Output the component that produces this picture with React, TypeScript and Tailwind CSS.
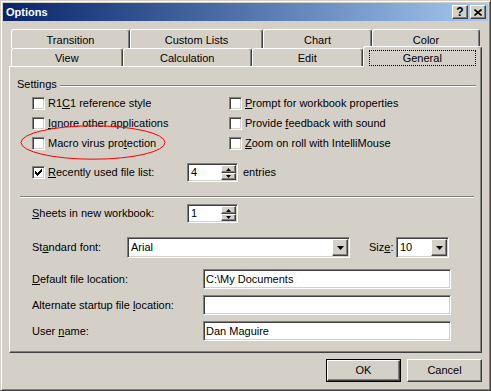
import React from 'react';

const raised =
  'border border-t-white border-l-white border-r-[#404040] border-b-[#404040] shadow-[inset_-1px_-1px_0_#808080] bg-[#d4d0c8]';
const sunken =
  'border border-t-[#808080] border-l-[#808080] border-r-white border-b-white shadow-[inset_1px_1px_0_#404040,inset_-1px_-1px_0_#d4d0c8] bg-white p-[1px]';

function Key({ children }: { children: React.ReactNode }) {
  return <span className="underline decoration-1 underline-offset-[1px]">{children}</span>;
}

// 7x7 pixel check mark, row by row
const checkRows: [number, number, number][] = [
  [6, 0, 1],
  [5, 1, 2],
  [0, 2, 1],
  [4, 2, 3],
  [0, 3, 2],
  [3, 3, 3],
  [0, 4, 5],
  [1, 5, 3],
  [2, 6, 1],
];

function CheckBox({ checked, label }: { checked?: boolean; label: React.ReactNode }) {
  return (
    <div className="flex items-center">
      <span className={`${sunken} flex h-[13px] w-[13px] shrink-0 items-center justify-center`}>
        {checked && (
          <svg width="7" height="7" viewBox="0 0 7 7" shapeRendering="crispEdges">
            {checkRows.map(([x, y, w], i) => (
              <rect key={i} x={x} y={y} width={w} height={1} fill="#000" />
            ))}
          </svg>
        )}
      </span>
      <span className="ml-[3px] whitespace-nowrap">{label}</span>
    </div>
  );
}

function Arrow({ up, w = 5 }: { up?: boolean; w?: number }) {
  const h = Math.ceil(w / 2);
  const pts = up ? `0,${h} ${w},${h} ${w / 2},0` : `0,0 ${w},0 ${w / 2},${h}`;
  return (
    <svg width={w} height={h} viewBox={`0 0 ${w} ${h}`}>
      <polygon points={pts} fill="#000" />
    </svg>
  );
}

function Spin({ value }: { value: string }) {
  return (
    <div className={`${sunken} flex h-[19px] w-[51px]`}>
      <span className="flex flex-1 items-center pl-[2px]">{value}</span>
      <div className="flex w-[15px] flex-col">
        <div className={`${raised} flex h-[8px] items-center justify-center`}>
          <Arrow up />
        </div>
        <div className={`${raised} flex flex-1 items-center justify-center`}>
          <Arrow />
        </div>
      </div>
    </div>
  );
}

function Combo({ value, className }: { value: string; className: string }) {
  return (
    <div className={`${sunken} flex h-[21px] ${className}`}>
      <span className="flex flex-1 items-center pl-[2px]">{value}</span>
      <div className={`${raised} flex w-[16px] items-center justify-center`}>
        <Arrow w={7} />
      </div>
    </div>
  );
}

function Field({ value }: { value?: string }) {
  return (
    <div className={`${sunken} flex h-[20px] w-[248px] items-center`}>
      <span className="pl-[1px]">{value}</span>
    </div>
  );
}

function Tab({ label, className }: { label: string; className: string }) {
  return (
    <div
      className={`flex items-center justify-center rounded-t-[3px] border-t border-r border-l border-t-white border-r-[#404040] border-l-white bg-[#d4d0c8] pt-[2px] shadow-[inset_-1px_0_0_#808080] ${className}`}
    >
      {label}
    </div>
  );
}

function TitleButton({ children, className = '' }: { children: React.ReactNode; className?: string }) {
  return (
    <div className={`${raised} flex h-[14px] w-[16px] items-center justify-center ${className}`}>{children}</div>
  );
}

function Button({ label, isDefault }: { label: string; isDefault?: boolean }) {
  return (
    <div className={`h-[23px] w-[75px] ${isDefault ? 'border border-black' : ''}`}>
      <div className={`${raised} flex h-full w-full items-center justify-center`}>{label}</div>
    </div>
  );
}

export default function App() {
  return (
    <div className="relative h-[391px] w-[491px] overflow-hidden border border-t-[#d4d0c8] border-r-[#404040] border-b-[#404040] border-l-[#d4d0c8] bg-[#d4d0c8] p-[2px] font-['Liberation_Sans',Arial,sans-serif] text-[11px] leading-[13px] text-black shadow-[inset_1px_1px_0_#ffffff,inset_-1px_-1px_0_#808080]">
      {/* title bar */}
      <div className="flex h-[18px] items-center bg-linear-to-r from-[#0a246a] to-[#a6caf0] pr-[2px] pl-[3px]">
        <span className="flex-1 font-bold text-white">Options</span>
        <TitleButton>
          <span className="text-[12px] leading-none font-bold">?</span>
        </TitleButton>
        <TitleButton className="ml-[2px]">
          <svg width="8" height="7" viewBox="0 0 8 7">
            <path d="M0.5 0.5 L7.5 6.5 M7.5 0.5 L0.5 6.5" stroke="#000" strokeWidth="1.6" />
          </svg>
        </TitleButton>
      </div>

      {/* tabs + page */}
      <div className="mt-[8px] ml-[6px] w-[473px]">
        <div className="flex h-[19px] pl-[2px]">
          <Tab label="Transition" className="h-[19px] w-[119px]" />
          <Tab label="Custom Lists" className="h-[19px] w-[133px]" />
          <Tab label="Chart" className="h-[19px] w-[109px]" />
          <Tab label="Color" className="h-[19px] w-[108px]" />
        </div>
        <div className="flex h-[18px] items-start pl-[2px]">
          <Tab label="View" className="h-[18px] w-[112px]" />
          <Tab label="Calculation" className="h-[18px] w-[130px]" />
          <Tab label="Edit" className="h-[18px] w-[111px]" />
          <div className="relative z-10 -mt-[2px] flex h-[21px] w-[120px] flex-col rounded-t-[3px] border-t border-r border-l border-t-white border-r-[#404040] border-l-white bg-[#d4d0c8] shadow-[inset_-1px_0_0_#808080]">
            <div className="mx-[5px] mt-[3px] flex h-[16px] items-center justify-center border border-dotted border-black">
              General
            </div>
          </div>
        </div>

        <div className="flex h-[287px] flex-col border border-t-white border-r-[#404040] border-b-[#404040] border-l-white shadow-[inset_-1px_-1px_0_#808080]">
          <div className="mt-[10px] flex h-[14px] items-center pr-[5px] pl-[7px]">
            <span>Settings</span>
            <div className="mt-[4px] ml-[3px] h-[2px] flex-1 border-t border-b border-t-[#808080] border-b-white" />
          </div>

          <div className="mt-[3px] grid grid-cols-[197px_1fr] grid-rows-[19px_20px_20px] items-center pl-[22px]">
            <CheckBox label={<>R1<Key>C</Key>1 reference style</>} />
            <CheckBox label={<><Key>P</Key>rompt for workbook properties</>} />
            <CheckBox label={<><Key>I</Key>gnore other applications</>} />
            <CheckBox label={<>Provide <Key>f</Key>eedback with sound</>} />
            <CheckBox label={<>Macro virus pro<Key>t</Key>ection</>} />
            <CheckBox label={<><Key>Z</Key>oom on roll with IntelliMouse</>} />
          </div>

          <div className="mt-[10px] flex h-[19px] items-center pl-[22px]">
            <div className="w-[155px]">
              <CheckBox checked label={<><Key>R</Key>ecently used file list:</>} />
            </div>
            <Spin value="4" />
            <span className="ml-[5px]">entries</span>
          </div>

          <div className="mt-[14px] ml-[10px] h-[2px] w-[454px] border-t border-b border-t-[#808080] border-b-white" />

          <div className="mt-[6px] flex h-[19px] items-center pl-[22px]">
            <span className="w-[155px]"><Key>S</Key>heets in new workbook:</span>
            <Spin value="1" />
          </div>

          <div className="mt-[14px] flex h-[21px] items-center pl-[22px]">
            <span className="w-[95px]">St<Key>a</Key>ndard font:</span>
            <Combo value="Arial" className="w-[223px]" />
            <span className="ml-[19px] w-[27px]">Siz<Key>e</Key>:</span>
            <Combo value="10" className="w-[53px]" />
          </div>

          <div className="mt-[11px] flex h-[20px] items-center pl-[22px]">
            <span className="w-[171px]"><Key>D</Key>efault file location:</span>
            <Field value="C:\My Documents" />
          </div>
          <div className="mt-[6px] flex h-[20px] items-center pl-[22px]">
            <span className="w-[171px]">Alternate startup file <Key>l</Key>ocation:</span>
            <Field />
          </div>
          <div className="mt-[6px] flex h-[20px] items-center pl-[22px]">
            <span className="w-[171px]">User <Key>n</Key>ame:</span>
            <Field value="Dan Maguire" />
          </div>
        </div>
      </div>

      {/* dialog buttons */}
      <div className="mt-[6px] mr-[6px] flex justify-end gap-[6px]">
        <Button label="OK" isDefault />
        <Button label="Cancel" />
      </div>

      {/* hand-drawn red circle around the macro option */}
      <svg
        className="absolute top-[124px] left-[19px]"
        width="147"
        height="36"
        viewBox="0 0 147 36"
      >
        <ellipse cx="73" cy="17.5" rx="72" ry="16.7" fill="none" stroke="#ff0000" strokeWidth="1" />
      </svg>
    </div>
  );
}
